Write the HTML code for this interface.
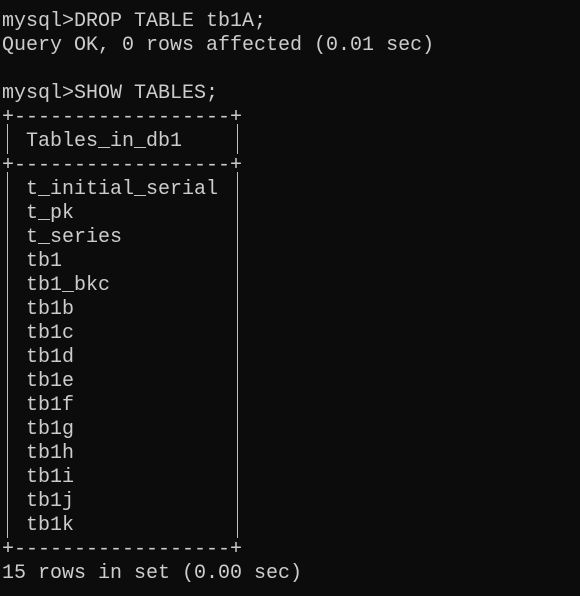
<!DOCTYPE html>
<html><head><style>
html,body{margin:0;padding:0;background:#0c0c0c;width:580px;height:596px;overflow:hidden}
pre{margin:0;position:absolute;left:2px;top:10px;font-family:"Liberation Mono",monospace;font-size:20px;line-height:24px;color:#cccccc;white-space:pre}
.v{position:absolute;width:1px;background:#b8c4cc}
</style></head><body>
<pre>mysql&gt;DROP TABLE tb1A;
Query OK, 0 rows affected (0.01 sec)

mysql&gt;SHOW TABLES;
+------------------+
  Tables_in_db1     
+------------------+
  t_initial_serial  
  t_pk              
  t_series          
  tb1               
  tb1_bkc           
  tb1b              
  tb1c              
  tb1d              
  tb1e              
  tb1f              
  tb1g              
  tb1h              
  tb1i              
  tb1j              
  tb1k              
+------------------+
15 rows in set (0.00 sec)</pre>
<div class="v" style="left:7px;top:124px;height:30px"></div>
<div class="v" style="left:237px;top:124px;height:30px"></div>
<div class="v" style="left:7px;top:172px;height:366px"></div>
<div class="v" style="left:237px;top:172px;height:366px"></div>
</body></html>
